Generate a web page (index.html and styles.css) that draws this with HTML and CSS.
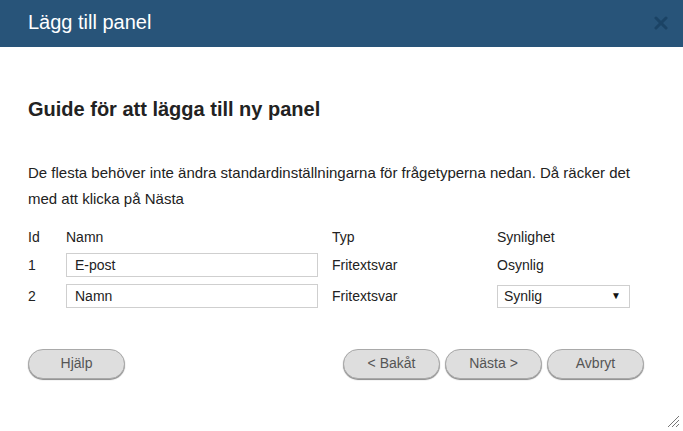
FILE: index.html
```html
<!DOCTYPE html>
<html lang="sv">
<head>
<meta charset="utf-8">
<title>Lägg till panel</title>
<link rel="stylesheet" href="styles.css">
</head>
<body>
<div class="dialog">
  <div class="titlebar">
    <span class="title">Lägg till panel</span>
    <svg class="close" width="14" height="14" viewBox="0 0 14 14"><path d="M2 2 L12 12 M12 2 L2 12" stroke="#1a4263" stroke-width="3" stroke-linecap="round"/></svg>
  </div>
  <div class="content">
    <h2 class="heading">Guide för att lägga till ny panel</h2>
    <p class="intro">De flesta behöver inte ändra standardinställningarna för frågetyperna nedan. Då räcker det med att klicka på Nästa</p>
    <div class="grid">
      <div class="hcell">Id</div>
      <div class="hcell">Namn</div>
      <div class="hcell">Typ</div>
      <div class="hcell">Synlighet</div>

      <div class="cell">1</div>
      <div class="cell"><input class="field" type="text" value="E-post"></div>
      <div class="cell">Fritextsvar</div>
      <div class="cell">Osynlig</div>

      <div class="cell">2</div>
      <div class="cell"><input class="field" type="text" value="Namn"></div>
      <div class="cell">Fritextsvar</div>
      <div class="cell"><div class="selectwrap"><select class="sel"><option>Synlig</option><option>Osynlig</option></select></div></div>
    </div>
    <div class="buttons">
      <button class="btn">Hjälp</button>
      <div class="right">
        <button class="btn">&lt; Bakåt</button>
        <button class="btn">Nästa &gt;</button>
        <button class="btn">Avbryt</button>
      </div>
    </div>
  </div>
  <svg class="grip" width="13" height="13" viewBox="0 0 13 13"><path d="M12 1 L1 12 M12 5 L5 12 M12 9 L9 12" stroke="#777" stroke-width="1"/></svg>
</div>
</body>
</html>
```
FILE: styles.css
```css
html, body {
  margin: 0;
  padding: 0;
  background: #fff;
}
body {
  font-family: "Liberation Sans", Arial, sans-serif;
  color: #222;
  font-size: 14px;
}
.dialog {
  position: relative;
  width: 683px;
  height: 431px;
  overflow: hidden;
  background: #fff;
}
.titlebar {
  height: 47px;
  background: #285479;
  display: flex;
  align-items: center;
  justify-content: space-between;
  padding: 0 15px 0 28px;
}
.title {
  color: #fff;
  font-size: 20px;
  margin-top: -3px;
}
.close {
  margin-top: -2px;
  opacity: 0.9;
}
.content {
  padding: 0 39px 0 28px;
}
.heading {
  margin: 51px 0 0 0;
  font-size: 20px;
  line-height: 22px;
  font-weight: bold;
  color: #222;
}
.intro {
  margin: 40px 0 0 0;
  line-height: 26px;
  font-size: 15px;
}
.grid {
  display: grid;
  grid-template-columns: 38px 266px 165px 133px;
  grid-template-rows: 20px 24px 24px;
  row-gap: 7px;
  margin-top: 14px;
  align-items: center;
}
.hcell, .cell {
  display: flex;
  align-items: center;
  height: 24px;
}
.grid .hcell {
  height: 20px;
  padding-top: 2px;
}
.field {
  box-sizing: border-box;
  width: 252px;
  height: 24px;
  border: 1px solid #cfcfcf;
  padding: 0 8px;
  font-family: "Liberation Sans", Arial, sans-serif;
  font-size: 14px;
  color: #222;
  outline: none;
}
.selectwrap {
  position: relative;
  width: 133px;
  height: 23px;
}
.sel {
  appearance: none;
  -webkit-appearance: none;
  box-sizing: border-box;
  width: 133px;
  height: 23px;
  border: 1px solid #cfcfcf;
  border-radius: 0;
  background: #fff;
  padding: 0 6px;
  font-family: "Liberation Sans", Arial, sans-serif;
  font-size: 14px;
  color: #222;
}
.selectwrap::after {
  content: "▼";
  position: absolute;
  right: 9px;
  top: 5px;
  font-size: 10px;
  color: #111;
  pointer-events: none;
}
.buttons {
  display: flex;
  justify-content: space-between;
  margin-top: 41px;
}
.right {
  display: flex;
  gap: 5px;
}
.btn {
  box-sizing: border-box;
  width: 97px;
  height: 30px;
  border-radius: 15px;
  border: 1px solid #a9a9a9;
  background: #dedede;
  box-shadow: 0 1px 1px #8a8a8a;
  font-family: "Liberation Sans", Arial, sans-serif;
  font-size: 14px;
  color: #555;
  padding: 0 0 2px 0;
}
.grip {
  position: absolute;
  right: 3px;
  bottom: 3px;
}
```
